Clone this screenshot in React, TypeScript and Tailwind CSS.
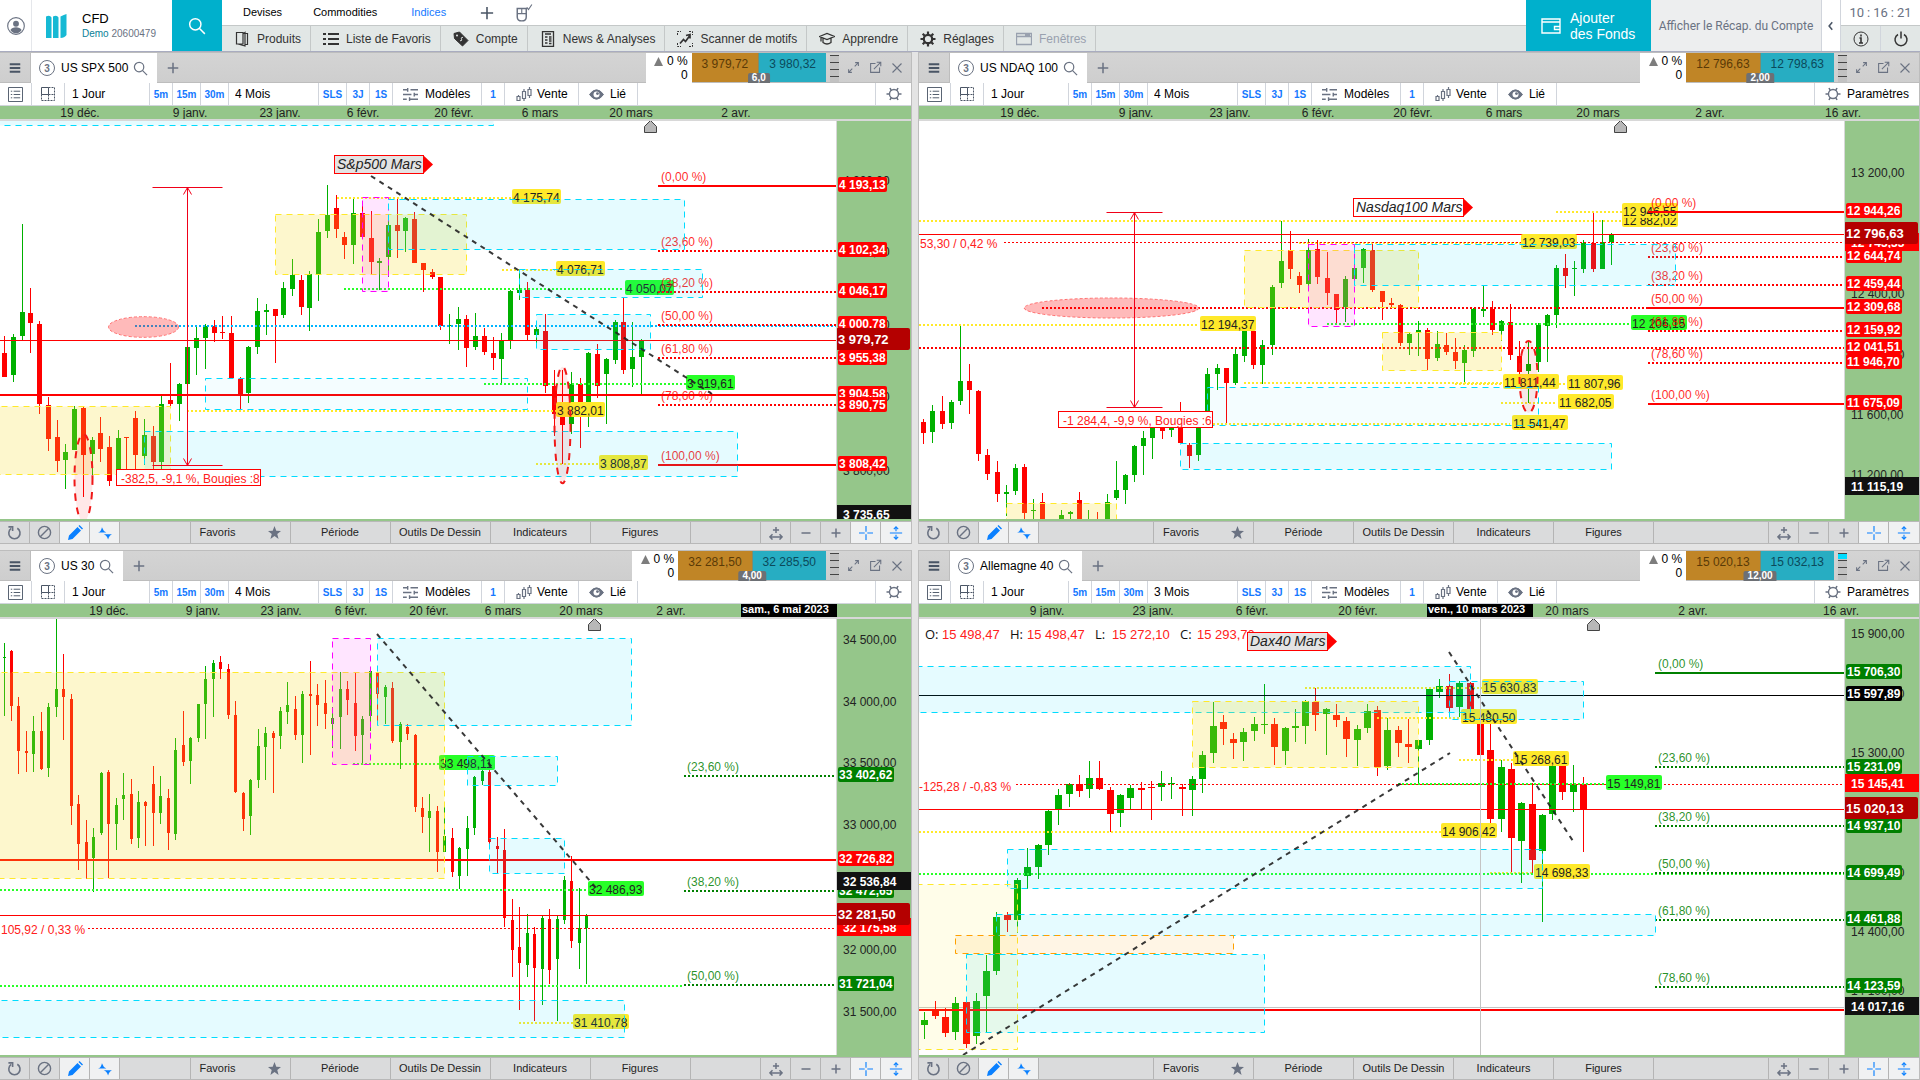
import { createContext, useContext } from "react";
import type { ReactNode } from "react";
import clsx from "clsx";

type Candle = ["g" | "r", number, number, number, number, number];
type Line = [color: string, y: number, x1: number, x2: number, kind: "solid" | "dots" | "thin" | "thindots"];
type Zone = [kind: keyof typeof zoneStyles, x1: number, y1: number, x2: number, y2: number];
type Tag = [color: string, x: number, y: number, text: string];
type Badge = [kind: "red" | "green" | "black" | "tick" | "last" | "fullred" | "cursor", y: number, text: string];

interface Market {
  name: string;
  range: string;
  bid: string;
  ask: string;
  spread: string;
  params?: boolean;
  active?: boolean;
  dates: [number, string][];
  cursorDate?: [number, string];
  // drawing units: `unit` of them make one pixel, `left` and `top` are in pixels
  unit: number;
  left: number;
  top: number;
  body: number;
  candles: Candle[];
  lines: Line[];
  zones: Zone[];
  tags: Tag[];
  trends: [number, number, number, number][];
  ellipses: ["soft" | "ring", number, number, number, number][];
  fib: { color: string; x: number; levels: [number, string, boolean][] };
  measure?: { x: number; y1: number; y2: number; half: number; box: [number, number, number]; text: string };
  flag?: { x1: number; x2: number; y: number; text: string; fill: string };
  change?: { x: number; y: number; text: string };
  ohlc?: [string, string][];
  crosshair?: [number, number];
  marker: number;
  badges: Badge[];
}

const YEL = "#ffe92a";
const LIME = "#28ff28";
const RED = "#ff0000";
const GREEN = "#008000";

const zoneStyles = {
  cyan: ["#00dcff", "#00dcff", 0.1],
  pale: ["#00dcff", "#00dcff", 0.045],
  yellow: ["#ffe92a", "#f8dc28", 0.23],
  cream: ["#ffe92a", "#ffe92a", 0.1],
  magenta: ["#ff00ff", "#ff00ff", 0.1],
  orange: ["#ffa000", "#ffa000", 0.1],
} as const;

const shift = (dx: number, list: Candle[]): Candle[] =>
  list.map(([c, x, ...rest]) => [c, x + dx, ...rest] as Candle);

const spx: Market = {
  name: "US SPX 500", range: "4 Mois", bid: "3 979,72", ask: "3 980,32", spread: "6,0",
  dates: [[80, "19 déc."], [190, "9 janv."], [280, "23 janv."], [363, "6 févr."], [454, "20 févr."], [540, "6 mars"], [631, "20 mars"], [736, "2 avr."]],
  unit: 3, left: 0, top: 1, body: 5,
  candles: [
    ["r", 13, 648, 771, 699, 771], ["g", 40, 642, 786, 651, 765], ["g", 67, 312, 660, 576, 648], ["r", 91, 504, 699, 579, 609],
    ["r", 118, 603, 882, 612, 852], ["r", 145, 831, 993, 855, 957], ["r", 172, 900, 1056, 951, 1023], ["g", 196, 972, 1107, 996, 1020],
    ["g", 223, 858, 991, 867, 990], ["r", 250, 858, 1131, 864, 1005], ["g", 277, 951, 1065, 960, 1002], ["r", 301, 891, 1026, 939, 987],
    ["r", 328, 948, 1098, 981, 1083], ["g", 355, 930, 1050, 954, 1050], ["r", 379, 951, 1050, 951, 954], ["r", 406, 873, 1050, 894, 1005],
    ["g", 433, 897, 1035, 945, 1008], ["r", 460, 918, 1050, 948, 1026], ["g", 484, 825, 1048, 852, 1026], ["r", 511, 729, 858, 840, 852],
    ["g", 538, 789, 903, 792, 852], ["g", 562, 681, 792, 681, 792], ["g", 589, 621, 765, 654, 684], ["g", 616, 612, 747, 618, 654],
    ["r", 643, 600, 666, 618, 639], ["r", 667, 588, 657, 636, 639], ["r", 694, 588, 777, 639, 774], ["r", 721, 771, 867, 777, 825],
    ["g", 745, 678, 849, 681, 819], ["g", 772, 534, 702, 573, 681], ["g", 799, 552, 645, 570, 576], ["r", 826, 567, 729, 567, 588],
    ["g", 850, 486, 594, 504, 585], ["g", 877, 417, 528, 465, 507], ["r", 904, 465, 585, 480, 561], ["g", 928, 453, 633, 462, 564],
    ["g", 955, 297, 543, 336, 462], ["g", 982, 195, 354, 285, 333], ["r", 1009, 225, 354, 264, 327], ["r", 1033, 336, 417, 351, 375],
    ["g", 1060, 237, 432, 279, 375], ["r", 1087, 250, 354, 279, 351], ["r", 1114, 273, 465, 354, 426], ["g", 1138, 414, 510, 423, 429],
    ["g", 1165, 300, 470, 315, 411], ["r", 1192, 237, 414, 315, 333], ["g", 1216, 290, 396, 294, 333], ["r", 1243, 276, 429, 297, 429],
    ["r", 1270, 429, 516, 429, 450], ["r", 1297, 447, 477, 456, 471], ["r", 1321, 471, 630, 471, 618], ["g", 1348, 582, 672, 615, 618],
    ["g", 1375, 561, 690, 597, 612], ["r", 1399, 585, 741, 597, 684], ["g", 1426, 579, 690, 648, 681],
    ...shift(1380, [
      ["r", 73, 624, 705, 648, 696], ["r", 100, 651, 750, 699, 714], ["g", 124, 639, 789, 660, 717], ["g", 151, 510, 687, 513, 660],
      ["g", 178, 447, 540, 510, 519], ["r", 202, 486, 660, 510, 645], ["g", 229, 612, 684, 627, 645], ["r", 256, 582, 819, 633, 798],
      ["r", 283, 750, 948, 798, 882], ["r", 307, 750, 1032, 850, 915], ["g", 334, 756, 941, 792, 912], ["r", 361, 774, 984, 792, 850],
      ["g", 385, 696, 921, 699, 850], ["r", 412, 672, 834, 702, 798], ["g", 439, 714, 912, 717, 762], ["g", 466, 600, 732, 606, 720],
      ["r", 490, 534, 762, 606, 750], ["g", 517, 606, 801, 711, 747], ["g", 544, 657, 822, 660, 711],
    ]),
  ],
  lines: [
    [YEL, 234, 1010, 1540, "dots"], [YEL, 873, 562, 1670, "dots"], [YEL, 450, 1505, 1665, "dots"], [YEL, 1032, 1609, 1795, "dots"],
    [LIME, 507, 1033, 1870, "dots"], [LIME, 792, 1453, 2060, "dots"], ["#00b4ff", 618, 405, 2520, "dots"],
    [RED, 661, 0, 9000, "thin"], [RED, 825, 0, 9000, "solid"],
  ],
  zones: [
    ["cyan", -30, -30, 1481, 16], ["yellow", 826, 283, 1400, 463], ["yellow", -30, 859, 511, 1063], ["magenta", 1087, 232, 1165, 514],
    ["cyan", 1165, 238, 2053, 388], ["cyan", 1558, 449, 2107, 532], ["cyan", 1609, 583, 1951, 688], ["pale", 616, 775, 1582, 869],
    ["cyan", 433, 934, 2212, 1069],
  ],
  tags: [
    [YEL, 1537, 234, "4 175,74"], [YEL, 1668, 450, "4 076,71"], [LIME, 1876, 507, "4 050,07"], [LIME, 2059, 792, "3 919,61"],
    [YEL, 1668, 873, "3 882,01"], [YEL, 1797, 1032, "3 808,87"],
  ],
  trends: [[1114, 168, 2135, 822]],
  ellipses: [["soft", 431, 620, 105, 31], ["ring", 250, 1075, 27, 132], ["ring", 1687, 915, 24, 175]],
  fib: {
    color: RED, x: 1974,
    levels: [[198, "0,00", true], [393, "23,60", false], [516, "38,20", false], [615, "50,00", false], [714, "61,80", false], [855, "78,60", false], [1035, "100,00", true]],
  },
  measure: { x: 562, y1: 202, y2: 1036, half: 105, box: [349, 1048, 144], text: "-382,5, -9,1 %, Bougies :8" },
  flag: { x1: 1003, x2: 1268, y: 106, text: "S&p500 Mars", fill: "#e3e3e3" },
  marker: 1951,
  badges: [
    ["tick", 182, "4 200,00"], ["tick", 397, "4 100,00"], ["tick", 615, "4 000,00"], ["tick", 832, "3 900,00"], ["tick", 1052, "3 800,00"],
    ["red", 195, "4 193,13"], ["red", 390, "4 102,34"], ["red", 513, "4 046,17"], ["red", 612, "4 000,78"], ["red", 713, "3 955,38"],
    ["red", 822, "3 904,58"], ["red", 854, "3 890,75"], ["red", 1033, "3 808,42"], ["last", 657, "3 979,72"], ["cursor", 1183, "3 735,65"],
  ],
};

const ndx: Market = {
  name: "US NDAQ 100", range: "4 Mois", bid: "12 796,63", ask: "12 798,63", spread: "2,00", params: true,
  dates: [[101, "19 déc."], [217, "9 janv."], [311, "23 janv."], [399, "6 févr."], [494, "20 févr."], [585, "6 mars"], [679, "20 mars"], [791, "2 avr."], [924, "16 avr."]],
  unit: 3, left: 4, top: 1, body: 5,
  candles: [
    ["r", 25, 897, 972, 906, 939], ["g", 52, 855, 969, 873, 936], ["r", 82, 828, 927, 873, 912], ["g", 109, 840, 927, 846, 909],
    ["g", 136, 618, 855, 783, 843], ["r", 163, 732, 882, 783, 810], ["r", 190, 810, 1023, 813, 1002], ["r", 217, 987, 1080, 1005, 1062],
    ["r", 247, 1023, 1146, 1056, 1122], ["g", 274, 1095, 1188, 1116, 1122], ["g", 301, 1032, 1126, 1044, 1113], ["r", 328, 1032, 1200, 1041, 1179],
    ["g", 355, 1137, 1200, 1170, 1173], ["r", 382, 1119, 1200, 1146, 1200], ["g", 439, 1170, 1200, 1185, 1200], ["g", 466, 1173, 1200, 1176, 1182],
    ["r", 493, 1116, 1200, 1140, 1200], ["g", 520, 1170, 1200, 1200, 1203], ["r", 547, 1176, 1200, 1200, 1203], ["g", 577, 1122, 1200, 1146, 1200],
    ["g", 604, 1023, 1140, 1110, 1134], ["g", 631, 1062, 1152, 1065, 1110], ["g", 658, 975, 1086, 978, 1065], ["g", 685, 934, 1065, 954, 978],
    ["g", 712, 880, 1017, 885, 954], ["r", 742, 880, 957, 885, 933], ["g", 769, 880, 951, 885, 930], ["r", 796, 846, 969, 885, 969],
    ["r", 823, 969, 1044, 975, 1008], ["g", 850, 920, 1023, 922, 1005], ["g", 877, 744, 920, 762, 880], ["g", 907, 732, 810, 744, 762],
    ["r", 934, 744, 909, 744, 789], ["g", 961, 687, 795, 702, 789], ["g", 988, 633, 726, 633, 708], ["r", 1015, 633, 747, 633, 735],
    ["g", 1042, 660, 792, 675, 735], ["g", 1072, 495, 705, 501, 675], ["g", 1099, 303, 504, 423, 489], ["r", 1126, 333, 477, 390, 447],
    ["r", 1153, 456, 519, 468, 495], ["g", 1180, 357, 500, 390, 492], ["r", 1207, 360, 492, 387, 471], ["r", 1237, 396, 555, 474, 519],
    ["r", 1264, 522, 610, 522, 570], ["g", 1291, 468, 606, 477, 561], ["g", 1318, 430, 480, 444, 477], ["g", 1345, 384, 489, 387, 444],
    ["r", 1372, 372, 516, 390, 510], ["r", 1402, 513, 600, 513, 546], ["r", 1429, 534, 561, 549, 555], ["r", 1456, 552, 678, 555, 669],
    ["g", 1483, 636, 705, 642, 669],
    ...shift(1455, [
      ["g", 55, 603, 708, 630, 636], ["r", 82, 624, 750, 630, 717], ["g", 112, 633, 723, 672, 714], ["r", 139, 639, 705, 675, 696],
      ["r", 166, 654, 747, 696, 723], ["g", 193, 675, 787, 690, 729], ["g", 220, 564, 711, 567, 693], ["g", 250, 495, 591, 567, 573],
      ["r", 277, 543, 645, 567, 630], ["g", 304, 600, 663, 603, 633], ["r", 331, 552, 720, 606, 705], ["r", 358, 663, 790, 708, 756],
      ["g", 385, 666, 850, 732, 753], ["g", 415, 609, 756, 615, 726], ["g", 442, 582, 726, 585, 618], ["g", 469, 435, 624, 444, 585],
      ["r", 496, 402, 504, 444, 468], ["g", 523, 423, 528, 444, 447], ["g", 550, 360, 459, 369, 447], ["r", 580, 279, 456, 369, 447],
      ["g", 607, 300, 447, 366, 447], ["g", 634, 339, 435, 345, 366],
    ]),
  ],
  lines: [
    [YEL, 302, 12, 2120, "dots"], [YEL, 275, 1923, 2120, "dots"], [YEL, 614, 12, 850, "dots"], [YEL, 370, 1153, 1820, "dots"],
    [YEL, 789, 988, 1765, "dots"], [YEL, 792, 1620, 1955, "dots"], [YEL, 849, 1759, 1925, "dots"], [YEL, 912, 893, 1785, "dots"],
    [LIME, 612, 1237, 2145, "dots"], [RED, 343, 0, 9000, "thin"], [RED, 367, 267, 9000, "thindots"],
    [RED, 564, 381, 2199, "dots"], [RED, 684, 0, 9000, "dots"],
  ],
  zones: [
    ["yellow", 988, 391, 1511, 563], ["yellow", 1402, 637, 1759, 751], ["yellow", 274, 1150, 604, 1230], ["magenta", 1180, 373, 1318, 619],
    ["cyan", 1318, 373, 2282, 496], ["pale", 877, 802, 1870, 916], ["cyan", 796, 970, 2089, 1048],
  ],
  tags: [
    [YEL, 2121, 303, "12 882,02"], [YEL, 2121, 276, "12 946,55"], [YEL, 1819, 370, "12 739,03"], [YEL, 855, 615, "12 194,37"],
    [YEL, 1764, 789, "11 811,44"], [YEL, 1956, 792, "11 807,96"], [YEL, 1929, 849, "11 682,05"], [YEL, 1791, 912, "11 541,47"],
    [LIME, 2148, 612, "12 206,15"],
  ],
  trends: [],
  ellipses: [["soft", 588, 563, 262, 30], ["ring", 1840, 772, 27, 108]],
  fib: {
    color: RED, x: 2199,
    levels: [[276, "0,00", true], [411, "23,60", false], [495, "38,20", false], [564, "50,00", true], [633, "61,80", false], [729, "78,60", false], [852, "100,00", true]],
  },
  measure: { x: 658, y1: 277, y2: 862, half: 84, box: [430, 874, 154], text: "-1 284,4, -9,9 %, Bougies :6" },
  flag: { x1: 1315, x2: 1645, y: 235, text: "Nasdaq100 Mars", fill: "#ffffff" },
  change: { x: 14, y: 370, text: "53,30 / 0,42 %" },
  marker: 2116,
  badges: [
    ["tick", 158, "13 200,00"], ["tick", 522, "12 400,00"], ["tick", 705, "12 000,00"], ["tick", 885, "11 600,00"], ["tick", 1066, "11 200,00"],
    ["red", 272, "12 944,26"], ["fullred", 365, "12 743,33"], ["red", 408, "12 644,74"], ["red", 492, "12 459,44"], ["red", 560, "12 309,68"],
    ["red", 630, "12 159,92"], ["red", 681, "12 041,51"], ["red", 727, "11 946,70"], ["red", 849, "11 675,09"],
    ["last", 339, "12 796,63"], ["cursor", 1099, "11 115,19"],
  ],
};

const dow: Market = {
  name: "US 30", range: "4 Mois", bid: "32 281,50", ask: "32 285,50", spread: "4,00",
  dates: [[109, "19 déc."], [203, "9 janv."], [281, "23 janv."], [351, "6 févr."], [429, "20 févr."], [503, "6 mars"], [581, "20 mars"], [671, "2 avr."]],
  cursorDate: [741, "sam., 6 mai 2023"],
  unit: 2.931, left: 0, top: 74, body: 3,
  candles: [
    ["g", 13, 287, 501, 328, 331], ["r", 34, 308, 516, 311, 472], ["r", 55, 445, 671, 472, 604], ["r", 79, 545, 665, 604, 609],
    ["g", 100, 501, 665, 545, 613], ["r", 124, 489, 659, 545, 657], ["g", 145, 463, 680, 475, 654], ["g", 169, 214, 504, 422, 475],
    ["r", 190, 319, 572, 422, 445], ["r", 214, 437, 821, 451, 765], ["r", 235, 733, 953, 759, 876], ["r", 259, 806, 979, 870, 923],
    ["g", 280, 829, 1017, 856, 917], ["g", 304, 665, 850, 668, 844], ["r", 325, 659, 976, 665, 818], ["g", 349, 742, 894, 762, 818],
    ["g", 370, 668, 806, 733, 744], ["r", 394, 686, 876, 730, 862], ["g", 415, 721, 888, 753, 859], ["r", 436, 750, 882, 753, 765],
    ["r", 460, 648, 882, 700, 785], ["g", 481, 677, 818, 736, 785], ["r", 505, 715, 894, 742, 844], ["g", 526, 566, 865, 601, 847],
    ["r", 550, 487, 648, 586, 636], ["g", 571, 563, 700, 566, 633], ["g", 595, 466, 577, 466, 566], ["g", 616, 354, 569, 393, 466],
    ["g", 640, 337, 504, 346, 393], ["r", 661, 325, 393, 343, 363], ["r", 685, 349, 510, 363, 498], ["r", 706, 457, 727, 498, 724],
    ["r", 730, 724, 838, 727, 803], ["g", 751, 686, 850, 689, 794], ["g", 775, 539, 712, 589, 689], ["g", 796, 533, 689, 551, 592],
    ["r", 820, 545, 727, 551, 566], ["g", 841, 475, 598, 487, 560], ["g", 862, 402, 525, 469, 489], ["r", 886, 443, 572, 481, 557],
    ["g", 907, 428, 639, 437, 557], ["r", 931, 340, 615, 437, 443], ["r", 952, 407, 530, 440, 469], ["r", 976, 396, 539, 463, 495],
    ["g", 997, 475, 595, 507, 525], ["g", 1021, 373, 598, 422, 504], ["r", 1042, 399, 498, 422, 454], ["r", 1066, 376, 604, 463, 560],
    ["g", 1087, 501, 639, 510, 557], ["g", 1111, 367, 545, 370, 501], ["r", 1132, 376, 525, 376, 437], ["g", 1156, 411, 525, 416, 445],
    ["r", 1177, 402, 580, 419, 574], ["g", 1201, 519, 657, 525, 577], ["r", 1222, 525, 572, 533, 554], ["r", 1246, 554, 782, 557, 768],
    ["r", 1267, 739, 844, 771, 797], ["g", 1288, 730, 900, 780, 800], ["r", 1312, 765, 958, 780, 900], ["g", 1333, 768, 900, 853, 900],
    ["r", 1357, 829, 973, 859, 958], ["g", 1378, 885, 1008, 888, 970], ["g", 1402, 794, 970, 829, 891], ["g", 1423, 677, 850, 680, 829],
    ...shift(1380, [
      ["g", 67, 657, 703, 662, 692], ["r", 88, 620, 876, 665, 870], ["r", 112, 856, 964, 882, 891], ["r", 133, 832, 1120, 894, 1093],
      ["r", 157, 1037, 1266, 1099, 1187], ["r", 178, 1061, 1363, 1178, 1225], ["g", 202, 1081, 1266, 1137, 1231], ["r", 223, 1120, 1395, 1140, 1240],
      ["g", 247, 1087, 1348, 1093, 1243], ["r", 268, 1067, 1287, 1096, 1246], ["g", 292, 1087, 1395, 1096, 1213], ["g", 313, 970, 1111, 982, 1099],
      ["r", 334, 911, 1181, 985, 1161], ["g", 358, 1005, 1243, 1123, 1166], ["g", 379, 1081, 1287, 1087, 1123],
    ]),
  ],
  lines: [
    [LIME, 642, 1060, 1320, "dots"], [LIME, 1011, 0, 1765, "dots"], [LIME, 1293, 0, 2052, "dots"], [YEL, 1401, 1558, 1720, "dots"],
    [RED, 923, 0, 9000, "solid"], [RED, 1085, 0, 9000, "thin"], [RED, 1124, 264, 9000, "thindots"],
  ],
  zones: [
    ["yellow", -30, 373, 1333, 977], ["magenta", 997, 274, 1111, 643], ["cyan", 1132, 274, 1895, 528], ["cyan", 1402, 619, 1673, 705],
    ["cyan", 1468, 860, 1694, 963], ["cyan", -30, 1335, 1874, 1443],
  ],
  tags: [[LIME, 1318, 642, "33 498,11"], [LIME, 1764, 1011, "32 486,93"], [YEL, 1719, 1401, "31 410,78"]],
  trends: [[1132, 262, 1792, 1007]],
  ellipses: [],
  fib: { color: GREEN, x: 2052, levels: [[677, "23,60", false], [1014, "38,20", false], [1290, "50,00", false]] },
  change: { x: 2, y: 1126, text: "105,92 / 0,33 %" },
  marker: 1783,
  badges: [
    ["tick", 277, "34 500,00"], ["tick", 459, "34 000,00"], ["tick", 640, "33 500,00"], ["tick", 822, "33 000,00"],
    ["tick", 1187, "32 000,00"], ["tick", 1368, "31 500,00"], ["green", 675, "33 402,62"], ["red", 921, "32 726,82"],
    ["green", 1013, "32 472,65"], ["green", 1288, "31 721,04"], ["fullred", 1121, "32 175,58"], ["cursor", 985, "32 536,84"], ["last", 1082, "32 281,50"],
  ],
};

const dax: Market = {
  name: "Allemagne 40", range: "3 Mois", bid: "15 020,13", ask: "15 032,13", spread: "12,00", params: true, active: true,
  dates: [[128, "9 janv."], [234, "23 janv."], [333, "6 févr."], [439, "20 févr."], [648, "20 mars"], [774, "2 avr."], [922, "16 avr."]],
  cursorDate: [508, "ven., 10 mars 2023"],
  unit: 2.931, left: 4, top: 74, body: 7,
  candles: [
    ["g", 28, 1369, 1448, 1392, 1407], ["r", 61, 1336, 1389, 1360, 1380], ["r", 91, 1357, 1442, 1383, 1430], ["g", 121, 1325, 1451, 1342, 1427],
    ["r", 154, 1339, 1474, 1339, 1462], ["g", 184, 1313, 1462, 1336, 1439], ["g", 214, 1202, 1427, 1249, 1322], ["g", 244, 1076, 1260, 1090, 1249],
    ["r", 277, 1076, 1134, 1084, 1099], ["g", 307, 976, 1137, 982, 1099], ["g", 337, 888, 1008, 944, 970], ["g", 370, 876, 979, 879, 944],
    ["g", 400, 777, 909, 780, 879], ["g", 430, 715, 821, 733, 774], ["g", 463, 698, 768, 700, 730], ["r", 493, 674, 739, 700, 721],
    ["g", 523, 633, 742, 683, 715], ["r", 553, 633, 718, 683, 715], ["r", 586, 709, 841, 718, 788], ["g", 616, 730, 826, 733, 785],
    ["g", 646, 703, 774, 712, 742], ["r", 679, 695, 774, 712, 718], ["r", 709, 692, 806, 709, 712], ["g", 739, 662, 750, 698, 709],
    ["g", 769, 680, 744, 698, 701], ["r", 802, 700, 794, 709, 715], ["g", 832, 677, 794, 686, 718], ["g", 862, 604, 727, 615, 686],
    ["g", 895, 460, 639, 530, 610], ["r", 925, 498, 586, 519, 539], ["r", 955, 551, 627, 569, 580], ["g", 985, 536, 633, 548, 577],
    ["g", 1018, 504, 574, 525, 545], ["g", 1048, 407, 554, 525, 528], ["r", 1078, 507, 645, 525, 592], ["g", 1111, 533, 645, 536, 604],
    ["g", 1141, 481, 577, 530, 536], ["g", 1171, 454, 583, 457, 530], ["r", 1201, 419, 545, 460, 498], ["g", 1234, 478, 615, 481, 495],
    ["r", 1264, 466, 533, 498, 513], ["r", 1294, 504, 621, 516, 569], ["g", 1327, 528, 648, 539, 572], ["g", 1357, 466, 551, 487, 536],
    ["r", 1387, 472, 677, 484, 651], ["g", 1417, 507, 659, 542, 648], ["r", 1450, 530, 621, 542, 580], ["r", 1480, 510, 639, 583, 592],
    ...shift(1455, [
      ["g", 55, 571, 700, 572, 598], ["g", 88, 422, 586, 422, 572], ["g", 118, 393, 448, 413, 431], ["r", 148, 378, 500, 413, 478],
      ["g", 178, 399, 504, 405, 475], ["r", 211, 402, 490, 405, 484], ["r", 241, 500, 615, 522, 615], ["r", 271, 522, 815, 601, 803],
      ["g", 304, 630, 841, 651, 803], ["r", 334, 639, 958, 657, 859], ["g", 364, 753, 991, 756, 868], ["r", 397, 698, 961, 759, 923],
      ["g", 427, 788, 1105, 791, 897], ["g", 457, 645, 806, 645, 788], ["r", 487, 645, 747, 645, 724], ["g", 520, 645, 782, 703, 724],
      ["r", 550, 680, 900, 701, 774],
    ]),
  ],
  lines: [
    [YEL, 419, 1170, 1700, "dots"], [YEL, 507, 1387, 1638, "dots"], [YEL, 630, 1633, 1795, "dots"], [YEL, 841, 12, 1578, "dots"],
    [YEL, 961, 1726, 1858, "dots"], [LIME, 964, 0, 9000, "dots"], ["#000000", 441, 0, 9000, "thin"], [RED, 775, 0, 9000, "thin"],
    [LIME, 700, 1450, 2070, "dots"], [RED, 702, 303, 9000, "thindots"], [RED, 1362, 0, 9000, "solid"],
  ],
  zones: [
    ["cyan", -30, 356, 1667, 490], ["yellow", 832, 458, 1511, 653], ["cyan", 1603, 400, 2006, 512], ["cyan", 277, 892, 1882, 1006],
    ["cream", -30, 995, 307, 1478], ["cyan", 244, 1082, 2222, 1144], ["cyan", 154, 1200, 1048, 1428], ["orange", 121, 1144, 956, 1197],
  ],
  tags: [
    [YEL, 1702, 419, "15 630,83"], [YEL, 1638, 507, "15 480,50"], [YEL, 1795, 630, "15 268,61"], [YEL, 1578, 841, "14 906,42"],
    [YEL, 1858, 961, "14 698,33"], [LIME, 2073, 701, "15 149,81"],
  ],
  trends: [[145, 1495, 1605, 609], [1603, 314, 1975, 868]],
  ellipses: [],
  fib: {
    color: GREEN, x: 2220,
    levels: [[375, "0,00", true], [651, "23,60", false], [823, "38,20", false], [961, "50,00", false], [1099, "61,80", false], [1295, "78,60", false]],
  },
  flag: { x1: 997, x2: 1235, y: 256, text: "Dax40 Mars", fill: "#e3e3e3" },
  change: { x: 12, y: 705, text: "-125,28 / -0,83 %" },
  ohlc: [["O:", "15 498,47"], ["H:", "15 498,47"], ["L:", "15 272,10"], ["C:", "15 293,70"]],
  crosshair: [1696, 1356],
  marker: 2035,
  badges: [
    ["tick", 260, "15 900,00"], ["tick", 437, "15 600,00"], ["tick", 611, "15 300,00"], ["tick", 961, "14 700,00"], ["tick", 1134, "14 400,00"],
    ["tick", 1308, "14 100,00"], ["green", 373, "15 706,30"], ["black", 437, "15 597,89"], ["green", 650, "15 231,09"], ["green", 823, "14 937,10"],
    ["green", 961, "14 699,49"], ["green", 1097, "14 461,88"], ["green", 1294, "14 123,59"], ["red", 1358, ""],
    ["fullred", 699, "15 145,41"], ["last", 770, "15 020,13"], ["cursor", 1352, "14 017,16"],
  ],
};

const MarketContext = createContext<Market>(spx);

const useScale = () => {
  const m = useContext(MarketContext);
  const X = (v: number) => Math.round(v / 3 - m.left);
  const Y = (v: number) => Math.round(v / m.unit - m.top);
  // centre of the pixel a hairline falls in
  const hairX = (v: number) => Math.floor(v / 3 - m.left) + 0.5;
  const hairY = (v: number) => Math.floor(v / m.unit - m.top) + 0.5;
  return { m, X, Y, hairX, hairY };
};

const labelWidth = (text: string) => (text.length === 8 ? 49 : 56);

const Chart = () => {
  const { m, X, Y, hairX, hairY } = useScale();
  return (
    <div className="relative min-w-0 flex-1 overflow-hidden bg-white">
      <svg className="absolute inset-0 h-full w-full text-[12px]" aria-label={m.name}>
        {m.crosshair && <path d={`M0 ${hairY(m.crosshair[1])}H3000`} stroke="#c4c4c4" />}
        <g shapeRendering="crispEdges">
          {m.candles.map(([c, x, hi, lo, top, bot]) => (
            <g key={x} fill={c === "g" ? "#00b000" : "#ff0000"}>
              <rect x={X(x)} y={Y(hi)} width={1} height={Math.max(1, Y(lo) - Y(hi))} />
              <rect x={X(x) - (m.body - 1) / 2} y={Y(top)} width={m.body} height={Math.max(1, Y(bot) - Y(top))} />
            </g>
          ))}
          {m.lines.map(([color, y, x1, x2, kind], i) => {
            const thin = kind.startsWith("thin");
            const ly = thin ? hairY(y) : Y(y);
            return (
              <line
                key={i}
                x1={X(x1)}
                x2={X(x2)}
                y1={ly}
                y2={ly}
                stroke={color}
                strokeWidth={thin ? 1 : 2}
                strokeDasharray={kind.endsWith("dots") ? "2 2" : undefined}
              />
            );
          })}
        </g>
        {m.tags.map(([color, x, y, text]) => (
          <g key={text}>
            <rect x={X(x)} y={Y(y) - 9} width={labelWidth(text)} height={15} rx={2} fill={color} />
            <text x={X(x) + 1} y={Y(y) + 4} fill="#222">{text}</text>
          </g>
        ))}
        {m.fib.levels.map(([y, pct, solid]) => (
          <g key={pct}>
            <text x={X(m.fib.x) + 3} y={Y(y) - 5} fill={m.fib.color} fillOpacity={0.85}>({pct} %)</text>
            <path
              d={`M${X(m.fib.x)} ${Y(y)}H3000`}
              stroke={m.fib.color}
              strokeWidth={2}
              strokeDasharray={solid ? undefined : "2 2"}
              shapeRendering="crispEdges"
            />
          </g>
        ))}
        {m.zones.map(([kind, x1, y1, x2, y2], i) => (
          <rect
            key={i}
            x={hairX(x1)}
            y={hairY(y1)}
            width={hairX(x2) - hairX(x1)}
            height={hairY(y2) - hairY(y1)}
            stroke={zoneStyles[kind][0]}
            fill={zoneStyles[kind][1]}
            fillOpacity={zoneStyles[kind][2]}
            strokeDasharray="6 5"
          />
        ))}
        {m.ellipses.map(([kind, cx, cy, rx, ry], i) => (
          <ellipse
            key={i}
            cx={hairX(cx)}
            cy={Y(cy)}
            rx={rx / 3}
            ry={ry / 3}
            fill="#ff0000"
            fillOpacity={kind === "soft" ? 0.27 : 0.09}
            stroke={kind === "soft" ? "#ff7070" : "#f01818"}
            strokeWidth={kind === "soft" ? 1 : 2}
            strokeDasharray={kind === "soft" ? "3 2" : "7 7"}
          />
        ))}
        {m.trends.map(([x1, y1, x2, y2], i) => (
          <line key={i} x1={X(x1)} y1={Y(y1)} x2={X(x2)} y2={Y(y2)} stroke="#222" strokeOpacity={0.9} strokeWidth={2} strokeDasharray="5 5" />
        ))}
        {m.measure && <Measure {...m.measure} />}
        {m.change && <text x={X(m.change.x)} y={Y(m.change.y) + 5} fill="#ff2020">{m.change.text}</text>}
        {m.ohlc?.map(([key, value], i) => (
          <g key={key} className="text-[13px]">
            <text x={6 + i * 85} y={20} fill="#111" className="font-['Open_Sans',sans-serif]">{key}</text>
            <text x={23 + i * 85} y={20} fill="#ff2020">{value}</text>
          </g>
        ))}
        {m.flag && (
          <g>
            <rect x={X(m.flag.x1) + 0.5} y={Y(m.flag.y) + 0.5} width={X(m.flag.x2) - X(m.flag.x1)} height={18} fill={m.flag.fill} stroke="#ff0000" />
            <path d={`M${X(m.flag.x2)} ${Y(m.flag.y)}v19l10 -9.5z`} fill="#ff0000" />
            <text x={X(m.flag.x1) + 3} y={Y(m.flag.y) + 14} fill="#222" className="text-[14px] italic">{m.flag.text}</text>
          </g>
        )}
        {m.crosshair && <path d={`M${hairX(m.crosshair[0])} 0V2000`} stroke="#c4c4c4" />}
        <path d={`M${X(m.marker) - 6}.5 11.5V5.5l6 -6l6 6v6z`} fill="#b8b8b8" stroke="#444" />
      </svg>
    </div>
  );
};

const Measure = ({ x, y1, y2, half, box, text }: NonNullable<Market["measure"]>) => {
  const { X, Y, hairX, hairY } = useScale();
  const cx = hairX(x);
  const a = hairY(y1);
  const b = hairY(y2);
  const w = half / 3;
  return (
    <g stroke="#f00018" fill="none">
      <path d={`M${cx} ${a}V${b}`} />
      <path d={`M${cx - w} ${a}h${w * 2}M${cx - w} ${b}h${w * 2}`} />
      <path d={`M${cx - 4} ${a + 7}l4 -7l4 7M${cx - 4} ${b - 7}l4 7l4 -7`} />
      <rect x={X(box[0]) + 0.5} y={Y(box[1]) + 0.5} width={box[2]} height={16} fill="#fff" stroke="#ff0000" />
      <text x={X(box[0]) + 5} y={Y(box[1]) + 14} fill="#ff2020" stroke="none">{text}</text>
    </g>
  );
};

const badgeFill = { red: "#ff0000", green: "#008000", black: "#000000" };

const PriceAxis = () => {
  const { m, Y } = useScale();
  return (
    <svg className="h-full w-[75px] shrink-0 border-l border-[#d8d8d8] bg-[#95c68a] text-[12px]" aria-hidden="true">
      {m.badges.map(([kind, y, text]) => {
        const cy = Y(y);
        if (kind === "tick") return <text key={text} x={6} y={cy + 4} fill="#222">{text}</text>;
        if (kind === "last")
          return (
            <g key={text}>
              <rect x={-1} y={cy - 11} width={74} height={22} rx={2} fill="#b40000" />
              <text x={1} y={cy + 5} fill="#fff" className="text-[13px] font-bold">{text}</text>
            </g>
          );
        if (kind === "fullred" || kind === "cursor")
          return (
            <g key={text}>
              <rect x={-1} y={cy - 9} width={76} height={18} fill={kind === "cursor" ? "#111" : "#ff0000"} />
              <text x={6} y={cy + 5} fill="#fff" className="font-bold">{text}</text>
            </g>
          );
        return (
          <g key={text}>
            <rect x={1} y={cy - 8} width={labelWidth(text)} height={15} rx={2} fill={badgeFill[kind]} />
            <text x={2} y={cy + 4} fill="#fff" className="font-bold">{text}</text>
          </g>
        );
      })}
    </svg>
  );
};

const DateAxis = () => {
  const { m } = useScale();
  return (
    <svg className="block h-[15px] w-full shrink-0 border-b-2 border-[#d8d8d8] bg-[#95c68a] text-[12px]">
      {m.dates.map(([x, text]) => (
        <text key={text} x={x} y={11} textAnchor="middle" fill="#222">{text}</text>
      ))}
      {m.cursorDate && (
        <g>
          <rect x={m.cursorDate[0]} y={0} width={m.cursorDate[1].length === 16 ? 96 : 106} height={13} fill="#000" />
          <text x={m.cursorDate[0] + 1} y={9} fill="#fff" className="text-[11px] font-bold">{m.cursorDate[1]}</text>
        </g>
      )}
    </svg>
  );
};

const Icon = ({ size = 16, className, children }: { size?: number; className?: string; children: ReactNode }) => (
  <svg
    width={size}
    height={size}
    viewBox="0 0 16 16"
    fill="none"
    stroke="currentColor"
    className={clsx("shrink-0", className)}
    aria-hidden="true"
  >
    {children}
  </svg>
);

const SearchIcon = ({ size = 16, className }: { size?: number; className?: string }) => (
  <Icon size={size} className={className}>
    <circle cx="6.5" cy="6.5" r="5" strokeWidth="1.3" />
    <path d="M10 10l5 5" strokeWidth="1.3" />
  </Icon>
);

const GearIcon = () => (
  <Icon className="text-gray-500">
    <circle cx="8" cy="8" r="4.5" strokeWidth="1.4" />
    <path d="M5.300 4.500L4 2M10.700 4.500L12 2M5.300 11.500L4 14M10.700 11.500L12 14M.5 8H3.500M12.500 8H15.500" strokeWidth="1.6" />
  </Icon>
);

const menu: { label: string; icon: ReactNode; off?: boolean }[] = [
  { label: "Produits", icon: <path d="M2.500 1.500H9V13H2.500zM9 3l2-1.500V15L4 13M11 2.500h2.500v11H11" strokeWidth="1.200" /> },
  { label: "Liste de Favoris", icon: <path d="M0 3h3M0 8h3M0 13h3M5 3h11M5 8h11M5 13h11" strokeWidth="2" /> },
  {
    label: "Compte",
    icon: (
      <>
        <path d="M1 2.500L6.500 1L15 9.500L9.500 15L1.500 7.500z" fill="currentColor" />
        <circle cx="4" cy="4.500" r="1" fill="#e2e7e6" stroke="none" />
        <path d="M7 9.500c1.500 1 2-.5 1.500-1.500s0-2 1.500-1.500" stroke="#e2e7e6" />
      </>
    ),
  },
  { label: "News & Analyses", icon: <path d="M2.500 .5h11v15h-11zM5 3h6M5 6h2.500M5 9h2.500M5 12h2.500M9 6h2.500M9 8h2.500M9 10h2.500M9 12.500h2.500" strokeWidth="1.300" /> },
  {
    label: "Scanner de motifs",
    icon: (
      <>
        <path d="M.5 4V.5H4M12 .5h3.500V4M.5 12v3.500H4M12 15.500h3.500V12" strokeDasharray="2 1" />
        <path d="M3 12.500l3.500-4l2 2l4-5.500M9 4.500l4-1v4" strokeWidth="1.700" />
      </>
    ),
  },
  { label: "Apprendre", icon: <path d="M.5 5.500L8 2.500l7.500 3L8 8.500zM4 7v4.500q4 3 8 0V7M2 6.500v4" strokeWidth="1.300" /> },
  {
    label: "Réglages",
    icon: (
      <>
        <circle cx="8" cy="8" r="4.200" strokeWidth="2.200" />
        <path d="M8 .5v3M8 12.500v3M.5 8h3M12.500 8h3M2.700 2.700l2 2M11.300 11.300l2 2M2.700 13.300l2-2M11.300 4.700l2-2" strokeWidth="2.200" />
      </>
    ),
  },
  { label: "Fenêtres", off: true, icon: <path d="M.5 2.500h15v11h-15zM.5 5.500h15M9 4h5" strokeWidth="1.300" /> },
];

const Header = () => (
  <header className="flex h-[52px] shrink-0 border-b border-[#a9acc0] bg-white">
    <button aria-label="Profil" className="flex w-8 shrink-0 items-center justify-center border-r border-gray-200 text-gray-500">
      <Icon size={18}>
        <circle cx="8" cy="8" r="7.400" />
        <circle cx="8" cy="6" r="2.600" fill="currentColor" stroke="none" />
        <path d="M3 11.500q1.500-2.500 5-2.500t5 2.500Q11 14.500 8 14.500T3 11.500z" fill="currentColor" stroke="none" />
      </Icon>
    </button>
    <div className="flex w-[140px] shrink-0 items-center gap-[15px] pl-[14px]">
      <svg width="21" height="24" viewBox="0 0 21 24" fill="#16b9d4" aria-hidden="true">
        <path d="M0 2.500q4-2 5.500 1V24H0zM7 2.500q4-2 5.500 1V24H7zM14.500 2.500Q18 .5 20.500 0v21q-2 3-6 3z" />
      </svg>
      <div>
        <div className="text-[13px] leading-4 text-black">CFD</div>
        <div className="text-[10px] leading-[14px] whitespace-nowrap text-gray-500">
          <span className="text-[#0a7f97]">Demo</span> 20600479
        </div>
      </div>
    </div>
    <button aria-label="Rechercher" className="flex w-[50px] shrink-0 items-center justify-center bg-[#00b0cc] text-white">
      <SearchIcon size={18} />
    </button>
    <div className="flex min-w-0 flex-1 flex-col">
      <nav className="flex h-[25px] shrink-0 items-center pl-[21px] text-[11px] text-black">
        <a href="#devises">Devises</a>
        <a href="#commodities" className="ml-[31px]">Commodities</a>
        <a href="#indices" className="ml-[34px] text-[#1478ff]">Indices</a>
        <button aria-label="Ajouter" className="ml-[34px] text-gray-600">
          <Icon size={14}><path d="M8 1v14M1 8h14" strokeWidth="1.800" /></Icon>
        </button>
        <button aria-label="Souris" className="ml-[21px] text-gray-500">
          <Icon size={18}>
            <path d="M2 4h8v7.500q0 3.500-4 3.500t-4-3.500z" strokeWidth="1.300" />
            <path d="M2 8.500h8M6 4v4.500M10.500 3l1.500 2l3-4.500" />
          </Icon>
        </button>
      </nav>
      <nav className="flex flex-1 border-t border-[#c4c8c8] bg-[#e2e7e6] text-[12px]">
        {menu.map(({ label, icon, off }) => (
          <button
            key={label}
            disabled={off}
            className={clsx(
              "flex items-center gap-[7px] border-r border-[#c4c8c8] pr-[9px] pl-3 whitespace-nowrap",
              off ? "text-gray-400" : "text-[#333]",
            )}
          >
            <Icon>{icon}</Icon>
            {label}
          </button>
        ))}
      </nav>
    </div>
    <button className="flex w-[125px] shrink-0 items-center gap-[9px] bg-[#00b0cc] pl-[15px] text-left text-[14px] leading-4 text-white">
      <svg width="20" height="16" viewBox="0 0 20 16" fill="none" stroke="currentColor" aria-hidden="true">
        <path d="M1 1h18v14H1zM1 4h18M13.500 8.500H19v3h-5.500z" strokeWidth="1.400" />
      </svg>
      <span>Ajouter<br />des Fonds</span>
    </button>
    <button className="w-[171px] shrink-0 border-r border-gray-300 bg-[#edeeef] font-[Roboto,sans-serif] text-[12px] whitespace-nowrap text-gray-500">
      Afficher le Récap. du Compte
    </button>
    <button aria-label="Replier" className="flex w-[18px] shrink-0 items-center justify-center text-gray-600">
      <Icon size={10}><path d="M10 2L5 8l5 6" strokeWidth="2.500" /></Icon>
    </button>
    <div className="flex w-20 shrink-0 flex-col border-l border-gray-300">
      <time className="flex h-[25px] items-center justify-center gap-[3px] font-[Roboto,sans-serif] text-[13px] text-gray-500">
        <span>10</span><span>:</span><span>16</span><span>:</span><span>21</span>
      </time>
      <div className="flex flex-1 border-t border-[#c4c8c8] bg-[#e2e7e6] text-[#333]">
        <button aria-label="Informations" className="flex flex-1 items-center justify-center border-r border-gray-300">
          <Icon><circle cx="8" cy="8" r="7" /><path d="M8 3.500v2M6.500 7H8v5M6 12h4" strokeWidth="1.600" /></Icon>
        </button>
        <button aria-label="Quitter" className="flex flex-1 items-center justify-center">
          <Icon><path d="M5 3.500a6 6 0 1 0 6 0M8 .5v7" strokeWidth="1.500" /></Icon>
        </button>
      </div>
    </div>
  </header>
);

const TabBar = () => {
  const { m } = useScale();
  return (
    <div className="flex h-[31px] shrink-0 border-y border-[#bdbdbd] bg-gradient-to-b from-[#d4d4d4] to-[#cecece] text-[12px] text-black">
      <button aria-label="Menu" className="flex w-[31px] items-center justify-center border-r border-[#bdbdbd] text-gray-600">
        <Icon size={12}><path d="M1 3h14M1 8h14M1 13h14" strokeWidth="2.500" /></Icon>
      </button>
      <div className="-mb-px flex items-center bg-white pr-[9px] pl-2 whitespace-nowrap">
        <span className="mr-[6px] flex h-4 w-4 items-center justify-center rounded-full border border-gray-500 text-[10px] font-bold text-gray-500">3</span>
        <span>{m.name}</span>
        <SearchIcon size={15} className="ml-[5px] text-gray-500" />
      </div>
      <button aria-label="Nouvel onglet" className="ml-[10px] text-gray-500">
        <Icon size={12}><path d="M8 1v14M1 8h14" strokeWidth="2" /></Icon>
      </button>
      <div className="ml-auto -mb-px flex w-[46px] shrink-0 flex-col items-end bg-white pt-px pr-1 leading-[14px]">
        <span className="flex items-center gap-1">
          <svg width="9" height="9" viewBox="0 0 9 9" fill="#7d7d7d" aria-hidden="true"><path d="M4.500 0L9 9H0z" /></svg>
          0 %
        </span>
        <span>0</span>
      </div>
      <div className="relative flex">
        <button className="bg-[#c08526] px-[10px] pb-2 text-[#5a3a06]">{m.bid}</button>
        <button className="border-l border-[#7f8b6c] bg-[#27adc2] px-[10px] pb-2 text-[#0b4a5b]">{m.ask}</button>
        <span className="absolute -bottom-px left-1/2 -translate-x-1/2 rounded-t-[2px] bg-[#6d7075] px-1 text-[10px] leading-[10px] font-bold text-white">
          {m.spread}
        </span>
      </div>
      <svg width="9" height="27" className="mx-1 mt-[2px]" aria-hidden="true">
        <rect width="9" height="27" fill="#c2c2c2" />
        {m.active && <rect width="9" height="6" fill="#00dcff" />}
        <path d="M0 .5h9M0 7.500h9M0 14.500h9M0 21.500h9" stroke="#444" />
      </svg>
      <div className="flex items-center gap-[9px] pr-2 pl-1 text-gray-500">
        <button aria-label="Agrandir"><Icon size={13}><path d="M9.500 6.500L14 2M10 2h4v4M6.500 9.500L2 14M2 10v4h4" strokeWidth="1.300" /></Icon></button>
        <button aria-label="Détacher"><Icon size={13}><path d="M8 3H2v11h11V8M6 10l8-8M9.500 1.500H14.500V6.500" strokeWidth="1.300" /></Icon></button>
        <button aria-label="Fermer"><Icon size={12}><path d="M2 2l12 12M14 2L2 14" strokeWidth="1.500" /></Icon></button>
      </div>
    </div>
  );
};

const quick = "shrink-0 border-r border-gray-300 text-[10px] font-bold text-[#1478ff]";

const Toolbar = () => {
  const { m } = useScale();
  return (
    <div className="flex h-[23px] shrink-0 border-b border-gray-300 bg-white text-[12px] text-black">
      <button aria-label="Liste" className="flex w-8 items-center justify-center border-r border-gray-300 text-gray-600">
        <Icon size={15}><path d="M.5 .5h15v15H.5zM6 4.500h7M6 8h7M6 11.500h7M3 4.500h1.500M3 8h1.500M3 11.500h1.500" /></Icon>
      </button>
      <button aria-label="Grille" className="flex w-[33px] items-center justify-center border-r border-gray-300 text-gray-600">
        <Icon><path d="M1.500 1.500h7v7h-7z" /><path d="M8.500 1.500h6v13h-13v-6M8.500 8.500h6M8.500 8.500v6" strokeDasharray="2 1" /></Icon>
      </button>
      <select aria-label="Intervalle" className="w-[85px] appearance-none border-r border-gray-300 pl-[7px]">
        <option>1 Jour</option>
      </select>
      <button className={clsx(quick, "w-[23px]")}>5m</button>
      <button className={clsx(quick, "w-7")}>15m</button>
      <button className={clsx(quick, "w-7")}>30m</button>
      <select aria-label="Période affichée" className="w-[90px] appearance-none border-r border-gray-300 pl-[6px]">
        <option>{m.range}</option>
      </select>
      <button className={clsx(quick, "w-7")}>SLS</button>
      <button className={clsx(quick, "w-[23px]")}>3J</button>
      <button className={clsx(quick, "w-[23px]")}>1S</button>
      <button className="flex w-[89px] items-center gap-[7px] border-r border-gray-300 pl-[10px]">
        <Icon size={15} className="text-gray-500">
          <path d="M0 3h5M8 3h8M0 8h9M12 8h4M0 13h4M7 13h9M5 1v4M12 6v4M7 11v4" strokeWidth="1.500" />
        </Icon>
        Modèles
      </button>
      <button className={clsx(quick, "w-[23px]")}>1</button>
      <button className="flex w-[74px] items-center gap-[5px] border-r border-gray-300 pl-[11px]">
        <Icon className="text-gray-500">
          <path d="M1 10.500h3v4H1zM6.500 5.500h3v7h-3zM12 3.500h3v6h-3zM2.500 9v1.500M8 3v2.500M8 12.500V15M13.500 1v2.500M13.500 9.500V12" strokeWidth="1.200" />
        </Icon>
        Vente
      </button>
      <button className="flex w-[59px] items-center gap-[6px] border-r border-gray-300 pl-[10px]">
        <Icon size={15} className="text-gray-500">
          <path d="M.5 8Q4 3 8 3t7.500 5Q12 13 8 13T.5 8z" fill="currentColor" />
          <circle cx="8" cy="8" r="3.200" fill="#fff" stroke="none" />
          <circle cx="9" cy="7" r="1.500" fill="currentColor" stroke="none" />
        </Icon>
        Lié
      </button>
      <button
        aria-label="Paramètres"
        className={clsx("ml-auto flex items-center gap-[6px] border-l border-gray-300", m.params ? "px-[10px]" : "pr-[9px] pl-[10px]")}
      >
        <GearIcon />
        {m.params && "Paramètres"}
      </button>
    </div>
  );
};

const cell = "flex h-full shrink-0 items-center justify-center border-r border-[#b4b4b4]";

const FootBar = () => (
  <div className="flex h-[23px] shrink-0 border-y border-[#b8b8b8] bg-[#dadbdc] text-[11px] text-[#222]">
    <button aria-label="Rétablir" className={clsx(cell, "w-[30px] text-gray-500")}>
      <Icon size={15}><path d="M11 3.500a6 6 0 1 1-6.500.2M1.500 2h4.500v4.500" strokeWidth="1.700" /></Icon>
    </button>
    <button aria-label="Effacer" className={clsx(cell, "w-[30px] text-gray-500")}>
      <Icon size={15}><circle cx="8" cy="8" r="6.500" strokeWidth="1.500" /><path d="M3.500 12.500l9-9" strokeWidth="1.500" /></Icon>
    </button>
    <button aria-label="Dessiner" className={clsx(cell, "w-[30px] bg-[#f0f1f2] text-[#0a80ff]")}>
      <Icon><path d="M1 15l1-4.500L10.500 2l3.500 3.500L5.500 14zM11.500 1l1-1l3.500 3.500l-1 1z" fill="currentColor" stroke="none" /></Icon>
    </button>
    <button aria-label="Trier" className={clsx(cell, "w-[30px] bg-[#f0f1f2] text-[#0a80ff]")}>
      <Icon size={14}><path d="M0 7.500Q3.500 7 4.500 1.500Q6 6 9.500 7.500zM6.500 9.500H16Q13 10.500 11.500 15.500Q10 10.500 6.500 9.500z" fill="currentColor" stroke="none" /></Icon>
    </button>
    <div className="flex-1 border-r border-[#b4b4b4]" />
    <button className="flex w-[100px] shrink-0 items-center justify-between border-r border-[#b4b4b4] px-[9px]">
      Favoris
      <Icon size={13} className="text-gray-500">
        <path d="M8 0l2.200 5.800l5.800.2l-4.600 3.700L13 16l-5-3.600L3 16l1.600-6.300L0 6l5.800-.2z" fill="currentColor" stroke="none" />
      </Icon>
    </button>
    <button className={clsx(cell, "w-[100px]")}>Période</button>
    <button className={clsx(cell, "w-[100px]")}>Outils De Dessin</button>
    <button className={clsx(cell, "w-[100px]")}>Indicateurs</button>
    <button className={clsx(cell, "w-[100px]")}>Figures</button>
    <div className="flex-1 border-r border-[#b4b4b4]" />
    <button aria-label="Ajuster" className={clsx(cell, "w-[30px] text-gray-500")}>
      <Icon size={14}><path d="M8 1v7M4.500 4.500h7M1 12.500h14M4 9.500l-3 3l3 3M12 9.500l3 3l-3 3" strokeWidth="1.700" /></Icon>
    </button>
    <button aria-label="Zoom arrière" className={clsx(cell, "w-[30px] text-gray-500")}>
      <Icon size={12}><path d="M2 8h12" strokeWidth="2" /></Icon>
    </button>
    <button aria-label="Zoom avant" className={clsx(cell, "w-[30px] text-gray-500")}>
      <Icon size={12}><path d="M2 8h12M8 2v12" strokeWidth="2" /></Icon>
    </button>
    <button aria-label="Réticule" className={clsx(cell, "w-[30px] bg-[#f0f1f2] text-[#0a80ff]")}>
      <Icon size={14}><path d="M0 8h6.500M9.500 8H16M8 0v6.500M8 9.500V16" strokeWidth="1.300" /></Icon>
    </button>
    <button aria-label="Échelle" className="flex w-[30px] shrink-0 items-center justify-center bg-[#f0f1f2] text-[#0a80ff]">
      <Icon size={14}><path d="M1 8h14M8 1v5M8 10v5M5.500 3.500L8 1l2.500 2.500M5.500 12.500L8 15l2.500-2.500" strokeWidth="1.300" /></Icon>
    </button>
  </div>
);

const Panel = ({ market, right }: { market: Market; right?: boolean }) => (
  <MarketContext.Provider value={market}>
    <section className={clsx("flex min-h-0 min-w-0 flex-col overflow-hidden border-[#bdbdbd]", right ? "border-x" : "border-r")}>
      <TabBar />
      <Toolbar />
      <DateAxis />
      <div className="flex min-h-0 flex-1">
        <Chart />
        <PriceAxis />
      </div>
      <div className="h-[2px] shrink-0 bg-[#95c68a]" />
      <FootBar />
    </section>
  </MarketContext.Provider>
);

const App = () => (
  <div className="flex h-screen flex-col overflow-hidden bg-[#e4e4e4] font-['Liberation_Sans',Arial,sans-serif]">
    <Header />
    <main className="grid min-h-0 flex-1 grid-cols-[912fr_1002fr] grid-rows-[492fr_530fr] gap-[6px]">
      <Panel market={spx} />
      <Panel market={ndx} right />
      <Panel market={dow} />
      <Panel market={dax} right />
    </main>
  </div>
);

export default App;
